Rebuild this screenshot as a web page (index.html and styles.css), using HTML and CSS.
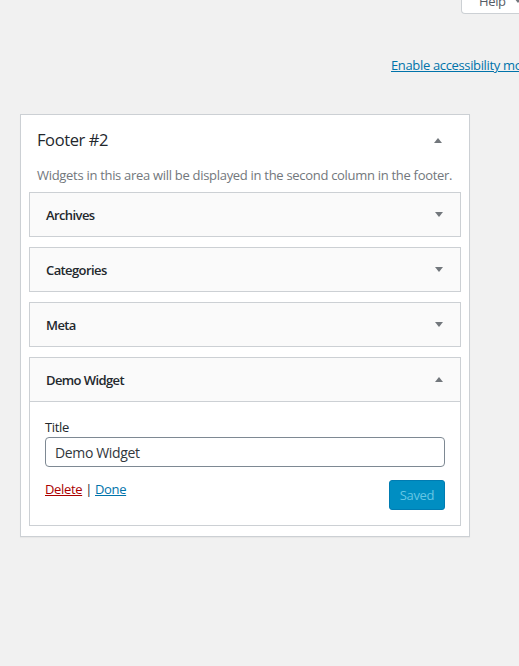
FILE: index.html
```html
<!DOCTYPE html>
<html lang="en">
<head>
<meta charset="utf-8">
<title>Widgets</title>
<link rel="stylesheet" href="styles.css">
</head>
<body>
<div class="topbar">
  <div class="help-tab">Help <span class="tab-arrow"></span></div>
</div>
<div class="a11y-row"><a href="#" class="a11y-link">Enable accessibility mode</a></div>
<div class="sidebar">
  <div class="sidebar-head">
    <h2 class="sidebar-title">Footer #2</h2>
    <span class="arrow arrow-up"></span>
  </div>
  <p class="sidebar-desc">Widgets in this area will be displayed in the second column in the footer.</p>
  <div class="widgets">
    <div class="widget">
      <div class="widget-top"><span class="widget-title">Archives</span><span class="arrow arrow-down"></span></div>
    </div>
    <div class="widget">
      <div class="widget-top"><span class="widget-title">Categories</span><span class="arrow arrow-down"></span></div>
    </div>
    <div class="widget">
      <div class="widget-top"><span class="widget-title">Meta</span><span class="arrow arrow-down"></span></div>
    </div>
    <div class="widget open">
      <div class="widget-top"><span class="widget-title">Demo Widget</span><span class="arrow arrow-up"></span></div>
      <div class="widget-inside">
        <label class="field-label" for="title">Title</label>
        <input class="field-input" id="title" type="text" value="Demo Widget">
        <div class="widget-actions">
          <div class="links"><a href="#" class="delete">Delete</a> | <a href="#" class="done">Done</a></div>
          <button class="saved" disabled>Saved</button>
        </div>
      </div>
    </div>
  </div>
</div>
</body>
</html>
```
FILE: styles.css
```css
html, body {
  margin: 0;
  padding: 0;
}
body {
  background: #f1f1f1;
  font-family: "Open Sans", "Noto Sans", sans-serif;
  font-size: 13px;
  letter-spacing: -0.35px;
  color: #23282d;
  overflow: hidden;
  width: 519px;
  height: 666px;
}
.topbar {
  display: flex;
  height: 15px;
}
.help-tab {
  margin-left: 461px;
  margin-top: -12px;
  height: 26px;
  width: 80px;
  box-sizing: border-box;
  background: #fff;
  border: 1px solid #ccd0d4;
  border-top: none;
  border-radius: 0 0 4px 4px;
  padding: 0 0 0 17px;
  font-size: 13px;
  line-height: 24px;
  color: #555d66;
  white-space: nowrap;
  display: flex;
  align-items: center;
  gap: 8px;
  flex-shrink: 0;
}
.tab-arrow {
  width: 0;
  height: 0;
  border-left: 4px solid transparent;
  border-right: 4px solid transparent;
  border-top: 5px solid #72777c;
}
.a11y-row {
  margin-top: 41px;
  padding-left: 391px;
  white-space: nowrap;
  height: 18px;
  line-height: 18px;
}
.a11y-link {
  color: #0073aa;
  text-decoration: underline;
  font-size: 13px;
}
.sidebar {
  margin: 40px 0 0 20px;
  width: 450px;
  box-sizing: border-box;
  background: #fff;
  border: 1px solid #ccd0d4;
  box-shadow: 0 1px 1px rgba(0,0,0,.04);
  padding: 0 8px 10px;
}
.sidebar-head {
  display: flex;
  align-items: center;
  justify-content: space-between;
  padding: 13px 19px 0 8px;
}
.sidebar-title {
  margin: 0;
  font-size: 16.5px;
  letter-spacing: -0.4px;
  font-weight: 400;
  line-height: 24px;
  color: #23282d;
}
.sidebar-desc {
  margin: 14px 0 0 8px;
  color: #72777c;
  font-size: 13px;
  letter-spacing: -0.3px;
  line-height: 18px;
  white-space: nowrap;
}
.widgets {
  margin-top: 8px;
  display: flex;
  flex-direction: column;
  gap: 10px;
}
.widget {
  border: 1px solid #ccd0d4;
  background: #fff;
}
.widget-top {
  height: 43px;
  background: #fafafa;
  display: flex;
  align-items: center;
  justify-content: space-between;
  padding: 0 17px 0 16px;
}
.widget.open .widget-top {
  border-bottom: 1px solid #ccd0d4;
}
.widget-title {
  font-weight: 600;
  font-size: 13px;
  letter-spacing: -0.6px;
  color: #23282d;
}
.arrow {
  width: 0;
  height: 0;
  border-left: 4px solid transparent;
  border-right: 4px solid transparent;
}
.arrow-down {
  border-top: 5px solid #72777c;
}
.arrow-up {
  border-bottom: 5px solid #72777c;
}
.widget-inside {
  padding: 16px 15px 15px;
  display: flex;
  flex-direction: column;
}
.field-label {
  font-size: 13px;
  line-height: 18px;
  color: #23282d;
}
.field-input {
  margin-top: 1px;
  height: 30px;
  box-sizing: border-box;
  border: 1px solid #7e8993;
  border-radius: 4px;
  padding: 0 9px;
  font-family: inherit;
  font-size: 14px;
  letter-spacing: -0.35px;
  color: #32373c;
  background: #fff;
}
.widget-actions {
  display: flex;
  justify-content: space-between;
  align-items: flex-start;
  margin-top: 13px;
}
.links {
  line-height: 18px;
  color: #23282d;
}
.delete {
  color: #a00;
  text-decoration: underline;
}
.done {
  color: #0073aa;
  text-decoration: underline;
}
.saved {
  width: 56px;
  height: 30px;
  border: 1px solid #007cb2;
  border-radius: 3px;
  background: #008ec2;
  color: #66c6e4;
  font-family: inherit;
  font-size: 13px;
  letter-spacing: -0.35px;
  padding: 0;
}
```
